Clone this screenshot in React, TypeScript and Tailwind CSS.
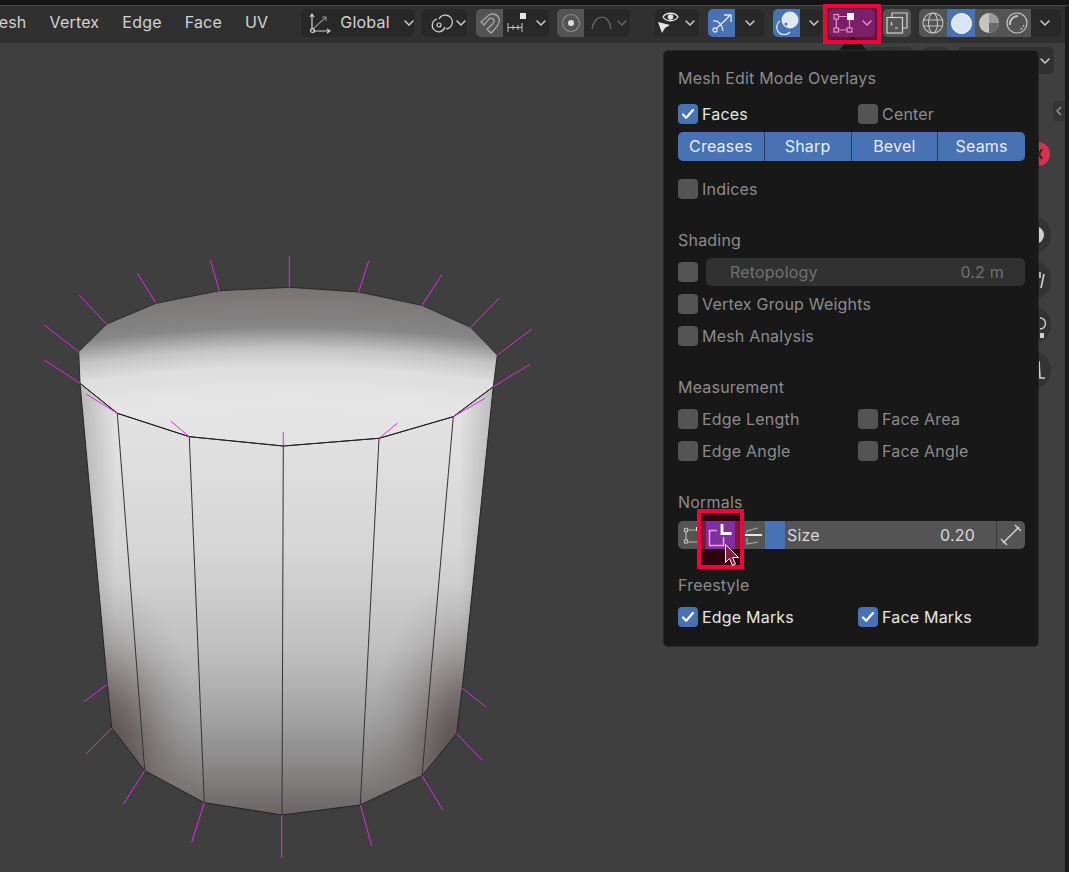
import React from "react";

const Chevron = ({ color = "#d4d4d4" }: { color?: string }) => (
  <svg width="10" height="6" viewBox="0 0 10 6" fill="none">
    <path d="M1 1l4 4 4-4" stroke={color} strokeWidth="1.4" strokeLinecap="round" strokeLinejoin="round" />
  </svg>
);

const Check = ({ on }: { on?: boolean }) => (
  <span className={`flex h-5 w-5 shrink-0 items-center justify-center rounded-[4px] ${on ? "bg-[#4772b3]" : "bg-[#545454]"}`}>
    {on && (
      <svg width="14" height="12" viewBox="0 0 14 12" fill="none">
        <path d="M2 6.5l3.2 3.2L12 2" stroke="#fff" strokeWidth="2.2" strokeLinecap="round" strokeLinejoin="round" />
      </svg>
    )}
  </span>
);

const CheckRow = ({ label, on }: { label: string; on?: boolean }) => (
  <div className="flex h-8 items-center gap-1">
    <Check on={on} />
    <span className={on ? "text-[#e6e6e6]" : "text-[#8c8c8c]"}>{label}</span>
  </div>
);

const Heading = ({ children }: { children: React.ReactNode }) => (
  <div className="flex h-8 items-center text-[#8c8c8c]">{children}</div>
);

const top = "78.7,351.7 106.7,324 156,303.3 219.3,290.7 289.3,287.3 358.7,292 422,305.3 470.7,327.3 497.3,355 493.3,386.7 453.3,416.7 379,438.3 283.3,446 189.3,436.7 117.3,413.3 80,383.3";
const body = "80,383.3 107.3,684.3 111.7,728 144.7,770.7 204.3,802.7 282,815 360.3,805 422,775.7 456.7,733.7 462.3,688.3 493.3,386.7 453.3,416.7 379,438.3 283.3,446 189.3,436.7 117.3,413.3";

const normals = [
  [78.7, 351.7, 44.3, 325], [106.7, 324, 79.3, 295.3], [156, 303.3, 137.3, 273], [219.3, 290.7, 210.3, 260],
  [289.3, 287.3, 289.3, 256], [358.7, 292, 368.7, 261], [422, 305.3, 441.7, 275], [470.7, 327.3, 499, 298.3],
  [497.3, 355, 531.7, 329.3], [493.3, 386.7, 530, 364.3], [453.3, 416.7, 485, 398.3], [379, 438.3, 397.7, 423],
  [283.3, 446, 283.3, 432], [189.3, 436.7, 171, 421.3], [117.3, 413.3, 86, 394], [80, 383.3, 44.3, 360],
  [107.3, 684.3, 84, 701.7], [111.7, 728, 86, 754], [144.7, 770.7, 123.3, 804.3], [204.3, 802.7, 191.7, 842.3],
  [281.7, 815, 281.7, 857.7], [360.3, 805, 371.7, 845.7], [422, 775.7, 442.7, 809.7], [456.7, 733.7, 481.7, 759.7],
  [462.3, 688.3, 485.7, 706.7],
];

const edges = [
  [117.3, 413.3, 144.7, 770.7], [189.3, 436.7, 204.3, 802.7], [283.3, 446, 282, 815],
  [379, 438.3, 360.3, 805], [453.3, 416.7, 422, 775.7],
];

const Cylinder = () => (
  <svg className="absolute left-0 top-0" width="1069" height="872">
    <defs>
      <radialGradient id="cap" cx="288" cy="640" r="360" gradientUnits="userSpaceOnUse" gradientTransform="translate(288 640) scale(2.2 1) translate(-288 -640)">
        <stop offset="0.54" stopColor="#e2e2e2" />
        <stop offset="0.667" stopColor="#e6e6e6" />
        <stop offset="0.76" stopColor="#dedede" />
        <stop offset="0.81" stopColor="#c4c4c4" />
        <stop offset="0.87" stopColor="#868686" />
        <stop offset="0.98" stopColor="#787372" />
      </radialGradient>
      <linearGradient id="side" x1="0" y1="400" x2="0" y2="815" gradientUnits="userSpaceOnUse">
        <stop offset="0" stopColor="#e4e4e4" />
        <stop offset="0.36" stopColor="#d6d6d6" />
        <stop offset="0.6" stopColor="#c0c0c0" />
        <stop offset="0.77" stopColor="#a2a2a2" />
        <stop offset="0.92" stopColor="#807c7c" />
        <stop offset="1" stopColor="#6a6464" />
      </linearGradient>
      <linearGradient id="rim" x1="78" y1="0" x2="498" y2="0" gradientUnits="userSpaceOnUse">
        <stop offset="0" stopColor="#000" stopOpacity="0.2" />
        <stop offset="0.09" stopColor="#000" stopOpacity="0" />
        <stop offset="0.91" stopColor="#000" stopOpacity="0" />
        <stop offset="1" stopColor="#000" stopOpacity="0.2" />
      </linearGradient>
      <radialGradient id="dark">
        <stop offset="0" stopColor="#4a3838" stopOpacity="0.85" />
        <stop offset="0.3" stopColor="#4e4040" stopOpacity="0.62" />
        <stop offset="0.55" stopColor="#544848" stopOpacity="0.32" />
        <stop offset="0.8" stopColor="#5a5050" stopOpacity="0.1" />
        <stop offset="1" stopColor="#605858" stopOpacity="0" />
      </radialGradient>
      <clipPath id="bodyClip">
        <polygon points={body} />
      </clipPath>
    </defs>
    <polygon points={body} fill="url(#side)" />
    <g clipPath="url(#bodyClip)">
      <rect x="70" y="380" width="440" height="440" fill="url(#rim)" />
      <ellipse cx="105" cy="750" rx="95" ry="170" fill="url(#dark)" />
      <ellipse cx="465" cy="750" rx="95" ry="170" fill="url(#dark)" />
    </g>
    <polygon points={top} fill="url(#cap)" />
    <polygon points={top} fill="none" stroke="#2a2a2a" strokeWidth="1" />
    <polygon points={body} fill="none" stroke="#222" strokeWidth="1" />
    {edges.map(([a, b, c, d], i) => (
      <line key={i} x1={a} y1={b} x2={c} y2={d} stroke="#333" strokeWidth="1" />
    ))}
    {normals.map(([a, b, c, d], i) => (
      <line key={i} x1={a} y1={b} x2={c} y2={d} stroke="#e22be2" strokeWidth="1" />
    ))}
  </svg>
);

export default function App() {
  return (
    <div className="relative h-[872px] w-[1069px] overflow-hidden bg-[#3f3f3f] text-[16px] tracking-[0.2px] text-[#d2d2d2]" style={{ fontFamily: "Inter, 'Liberation Sans', sans-serif" }}>
      <div className="h-[5px] bg-[#141414]" />
      {/* header */}
      <div className="flex h-[38px] items-center rounded-tr-lg border-t border-[#4a4a4a] bg-[#303030] pb-[3px]">
        <div className="mb-[2px] ml-[-16px] flex gap-[23px]">
          <span>Mesh</span>
          <span>Vertex</span>
          <span>Edge</span>
          <span>Face</span>
          <span>UV</span>
        </div>
        <div className="ml-[33px] flex h-7 w-[113px] items-center rounded-[5px] bg-[#282828] pl-2">
          <svg width="22" height="22" viewBox="0 0 22 22" fill="none" stroke="#d2d2d2" strokeWidth="1.2">
            <path d="M3 18V3M1 5l2-3 2 3M4 19h16M18 17l3 2-3 2" />
            <path d="M4 17L17 5M13 5h4v4" stroke="#8a8a8a" />
            <circle cx="3.5" cy="18.5" r="2" />
          </svg>
          <span className="mb-[2px] ml-[9px] w-[64px]">Global</span>
          <Chevron />
        </div>
        <div className="ml-2 flex h-7 w-[45px] items-center rounded-[5px] bg-[#282828] pl-2">
          <svg width="24" height="24" viewBox="0 0 24 24" fill="none" stroke="#d2d2d2" strokeWidth="1.2">
            <path d="M9 8a7 7 0 1 1 7 10" />
            <path d="M15 16a6.500 6.500 0 1 1-8-8" />
            <circle cx="9" cy="14" r="2" />
          </svg>
          <span className="ml-0.5"><Chevron /></span>
        </div>
        <div className="ml-[9px] flex h-7 w-[73px] items-center overflow-hidden rounded-[5px] bg-[#282828]">
          <div className="flex h-7 w-[27px] items-center justify-center bg-[#545454]">
            <svg width="22" height="22" viewBox="0 0 22 22" fill="none" stroke="#a8a8a8" strokeWidth="1.3">
              <path d="M2 10L10 3Q16 0 20 6Q22 12 12 21L8 17Q16 11 15 8Q13 5 10 7L5 13Z" />
            </svg>
          </div>
          <svg className="ml-1" width="22" height="22" viewBox="0 0 22 22" fill="none" stroke="#c4c4c4" strokeWidth="1">
            <path d="M1 11v9M6 13v5M11 13v5M15 11v9M1 15.500h14" />
            <rect x="13" y="1" width="6" height="6" fill="#e6e6e6" stroke="none" />
          </svg>
          <span className="ml-[7px]"><Chevron /></span>
        </div>
        <div className="ml-2 flex h-7 w-[73px] items-center overflow-hidden rounded-[5px] bg-[#282828]">
          <div className="flex h-7 w-[27px] items-center justify-center bg-[#545454]">
            <svg width="20" height="20" viewBox="0 0 20 20" fill="none">
              <circle cx="10" cy="10" r="8.500" stroke="#8a8a8a" strokeWidth="1.2" />
              <circle cx="10" cy="10" r="3" fill="#e0e0e0" />
            </svg>
          </div>
          <svg className="ml-[7px]" width="22" height="16" viewBox="0 0 22 16" fill="none" stroke="#6a6a6a" strokeWidth="1.2">
            <path d="M1 14C2 6 7 2 11 2s8 4 9 12" />
          </svg>
          <span className="ml-1"><Chevron color="#666666" /></span>
        </div>
        <div className="ml-[25px] flex h-7 w-[44px] items-center rounded-[5px] bg-[#282828] pl-[2px]">
          <svg width="26" height="24" viewBox="0 0 26 24" fill="none">
            <path d="M6 6c3-5 12-5 15 0-3 5-12 5-15 0z" stroke="#e6e6e6" strokeWidth="1.3" />
            <circle cx="13.500" cy="6" r="2.800" fill="#e6e6e6" />
            <path d="M1 11l12 3-5 3-3 5z" fill="#e6e6e6" />
          </svg>
          <span className="ml-[2px]"><Chevron /></span>
        </div>
        <div className="ml-[9px] flex h-7 w-[56px] items-center overflow-hidden rounded-[5px] bg-[#282828]">
          <div className="flex h-7 w-[27px] items-center justify-center bg-[#4772b3]">
            <svg width="22" height="22" viewBox="0 0 22 22" fill="none" stroke="#dfe7f3" strokeWidth="1.3">
              <circle cx="4" cy="18" r="2" />
              <path d="M6 16C10 12 14 9 19 3M13 3h7v7" />
              <path d="M2 9c5-1 9 3 10 10" />
            </svg>
          </div>
          <span className="ml-[10px]"><Chevron /></span>
        </div>
        <div className="ml-[9px] flex h-7 w-[49px] items-center overflow-hidden rounded-[5px] bg-[#282828]">
          <div className="flex h-7 w-[27px] items-center justify-center bg-[#4772b3]">
            <svg width="24" height="24" viewBox="0 0 24 24" fill="none">
              <path d="M5 10a7.500 7.500 0 1 0 10 11" stroke="#dfe7f3" strokeWidth="1.3" />
              <circle cx="15" cy="9" r="8.500" fill="#dfe7f3" />
              <circle cx="11" cy="13" r="1.500" fill="#4772b3" />
            </svg>
          </div>
          <span className="ml-[9px]"><Chevron /></span>
        </div>
        <div className="relative z-20 ml-[7px] flex h-7 w-[46px] items-center rounded-[5px] bg-[#7a2068] pl-1">
          <svg width="22" height="22" viewBox="0 0 22 22" fill="none" stroke="#f08cc8" strokeWidth="1.2">
            <path d="M5.500 4.500H14M3.300 7v9M5.500 18H14M16.500 8v8" />
            <rect x="1" y="2.500" width="4.500" height="4.500" />
            <rect x="1" y="16" width="4.500" height="4" />
            <rect x="14" y="16" width="5" height="4" />
            <rect x="14" y="1" width="7" height="7" fill="#fff" stroke="none" />
          </svg>
          <span className="ml-[7px]"><Chevron color="#f08cc8" /></span>
        </div>
        <div className="ml-2 flex h-7 w-7 items-center justify-center rounded-[5px] bg-[#545454]">
          <svg width="22" height="22" viewBox="0 0 22 22" fill="none" stroke="#d2d2d2" strokeWidth="1.2">
            <path d="M6 5V1h15v15h-4" />
            <rect x="1" y="5.500" width="15.500" height="15.500" />
            <path d="M5.500 10v3h1M9 16h3" />
          </svg>
        </div>
        <div className="ml-2 flex h-7 w-[142px] items-center overflow-hidden rounded-[5px] bg-[#282828]">
          <div className="flex h-7 w-7 items-center justify-center bg-[#545454]">
            <svg width="22" height="22" viewBox="0 0 22 22" fill="none" stroke="#c4c4c4" strokeWidth="1.1">
              <circle cx="11" cy="11" r="10" />
              <ellipse cx="11" cy="11" rx="4.500" ry="10" />
              <path d="M1.500 8h19M1.500 14h19" />
            </svg>
          </div>
          <div className="flex h-7 w-7 items-center justify-center bg-[#4772b3]">
            <span className="h-[21px] w-[21px] rounded-full border border-white bg-[#dbe4f1]" />
          </div>
          <div className="flex h-7 w-7 items-center justify-center bg-[#545454]">
            <svg width="22" height="22" viewBox="0 0 22 22">
              <circle cx="11" cy="11" r="10" fill="#c4c4c4" />
              <path d="M11 11h10a10 10 0 0 1-10 10z" fill="#6a6a6a" />
              <path d="M11 1a10 10 0 0 1 10 10H11z" fill="#9a9a9a" />
            </svg>
          </div>
          <div className="flex h-7 w-7 items-center justify-center bg-[#545454]">
            <svg width="22" height="22" viewBox="0 0 22 22" fill="none" stroke="#c4c4c4">
              <circle cx="11" cy="11" r="10" strokeWidth="1.2" />
              <path d="M4 13A8 8 0 0 1 12 4" strokeWidth="2" />
              <path d="M18 13a8 8 0 0 1-5 5" strokeWidth="1.200" strokeDasharray="2 1.500" />
            </svg>
          </div>
          <span className="ml-[9px]"><Chevron /></span>
        </div>
      </div>

      {/* second row, mostly behind the popover */}
      <div className="flex items-center justify-end pr-[15px] pt-1">
        <div className="flex h-[27px] w-[46px] divide-x divide-[#2a2a2a] rounded-[5px] bg-[#333]">
          <span className="flex-1" />
          <span className="flex-1" />
        </div>
        <div className="ml-[9px] h-[27px] w-[26px] rounded-[5px] bg-[#333]" />
        <div className="ml-[10px] flex h-[27px] w-[96px] items-center justify-end rounded-[5px] bg-[#303030] pr-[4px]">
          <Chevron />
        </div>
      </div>

      <Cylinder />

      {/* right gizmo */}
      <div className="absolute right-[4px] top-[101px] flex h-5 w-3 items-center justify-center rounded-l-[4px] bg-[#353535]">
        <svg width="6" height="10" viewBox="0 0 6 10" fill="none">
          <path d="M5 1L1 5l4 4" stroke="#a0a0a0" strokeWidth="1.2" />
        </svg>
      </div>
      <div className="absolute left-[1026px] top-[142px] h-6 w-6 rounded-full bg-[#d9304f]" />
      <svg className="absolute left-[1036px] top-[148px]" width="8" height="12" viewBox="0 0 8 12" fill="none">
        <path d="M0 1l6 10M6 1L0 11" stroke="#4a1520" strokeWidth="2" />
      </svg>
      <div className="absolute left-[1013px] top-[216px] h-[38px] w-[38px] rounded-full bg-[#333]" />
      <div className="absolute left-[1030px] top-[226px] h-[18px] w-[14px] rounded-r-full bg-[#d0d0d0]" />
      <div className="absolute left-[1013px] top-[261px] h-[38px] w-[38px] rounded-full bg-[#333]" />
      <svg className="absolute left-[1036px] top-[270px]" width="10" height="20" viewBox="0 0 10 20" fill="none" stroke="#d0d0d0" strokeWidth="1.6">
        <path d="M4 2v6M8 4L5 18" />
      </svg>
      <div className="absolute left-[1013px] top-[306px] h-[38px] w-[38px] rounded-full bg-[#333]" />
      <svg className="absolute left-[1036px] top-[316px]" width="10" height="24" viewBox="0 0 10 24" fill="none" stroke="#d0d0d0" strokeWidth="1.4">
        <path d="M4 2a5 5 0 0 1 0 11" />
        <rect x="4" y="17" width="4" height="5" fill="#d0d0d0" stroke="none" />
      </svg>
      <div className="absolute left-[1013px] top-[351px] h-[38px] w-[38px] rounded-full bg-[#333]" />
      <svg className="absolute left-[1036px] top-[359px]" width="10" height="22" viewBox="0 0 10 22" fill="none" stroke="#d0d0d0" strokeWidth="1.6">
        <path d="M3 2l1 17h5" />
      </svg>
      <div className="absolute bottom-0 right-0 top-[6px] w-1 bg-[#1a1a1a]" />

      {/* popover */}
      <div className="absolute left-[663px] top-[50px] w-[376px] rounded-[5px] border border-[#282828] bg-[#181818] pb-[13px] pl-[14px] pr-[13px] pt-[11px]">
        <div className="absolute left-[175px] top-[-15px] h-0 w-0 border-x-[14px] border-b-[14px] border-x-transparent border-b-[#181818]" />
        <Heading>Mesh Edit Mode Overlays</Heading>
        <div className="mt-1 grid grid-cols-[180px_1fr]">
          <CheckRow label="Faces" on />
          <CheckRow label="Center" />
        </div>
        <div className="flex h-8 items-center">
          <div className="grid h-[29px] w-full grid-cols-4 divide-x divide-[#2a3a55] rounded-[5px] bg-[#4772b3] text-[#ececec]">
            <span className="flex items-center justify-center">Creases</span>
            <span className="flex items-center justify-center">Sharp</span>
            <span className="flex items-center justify-center">Bevel</span>
            <span className="flex items-center justify-center">Seams</span>
          </div>
        </div>
        <div className="mt-[11px]">
          <CheckRow label="Indices" />
        </div>

        <div className="mt-[19px]">
          <Heading>Shading</Heading>
          <div className="flex h-8 items-center gap-2">
            <Check />
            <div className="flex h-7 flex-1 items-center justify-between rounded-[5px] bg-[#313131] pl-6 pr-[21px] text-[#707070]">
              <span>Retopology</span>
              <span>0.2 m</span>
            </div>
          </div>
          <CheckRow label="Vertex Group Weights" />
          <CheckRow label="Mesh Analysis" />
        </div>

        <div className="mt-[19px]">
          <Heading>Measurement</Heading>
          <div className="grid grid-cols-[180px_1fr]">
            <CheckRow label="Edge Length" />
            <CheckRow label="Face Area" />
            <CheckRow label="Edge Angle" />
            <CheckRow label="Face Angle" />
          </div>
        </div>

        <div className="mt-[19px]">
          <Heading>Normals</Heading>
          <div className="mt-[3px] flex h-7 items-center overflow-hidden rounded-[5px] bg-[#545454]">
            <div className="flex h-7 w-[29px] items-center justify-center">
              <svg width="20" height="20" viewBox="0 0 20 20" fill="none" stroke="#b8b8b8" strokeWidth="1.2">
                <path d="M4 5h9M3 7v8M5 17h11M17 15V9" />
                <rect x="1.500" y="3.500" width="3" height="3" />
                <rect x="1.500" y="15" width="3" height="3" />
                <rect x="15.500" y="15" width="3" height="3" />
                <path d="M14 6V3h3" stroke="#e0e0e0" strokeWidth="2" />
              </svg>
            </div>
            <div className="w-[29px]" />
            <div className="flex h-7 w-[29px] items-center justify-center">
              <svg width="22" height="20" viewBox="0 0 22 20" fill="none" stroke="#a8a8a8" strokeWidth="1.2">
                <path d="M7 8V6l11-3M7 13v6l11-2" />
                <path d="M5 10h17" stroke="#e6e6e6" strokeWidth="2.2" />
              </svg>
            </div>
            <div className="h-7 w-5 bg-[#4772b3]" />
            <div className="flex h-7 w-[212px] items-center justify-between border-r border-[#3a3a3a] pl-[2px] pr-[21px] text-[#d8d8d8]">
              <span>Size</span>
              <span>0.20</span>
            </div>
            <div className="flex h-7 flex-1 items-center justify-center">
              <svg width="22" height="22" viewBox="0 0 22 22" fill="none" stroke="#d8d8d8" strokeWidth="1.3">
                <path d="M3 19L19 3M15 1l6 6M1 15l6 6" />
              </svg>
            </div>
          </div>
        </div>

        <div className="mt-[20px]">
          <Heading>Freestyle</Heading>
          <div className="grid grid-cols-[180px_1fr]">
            <CheckRow label="Edge Marks" on />
            <CheckRow label="Face Marks" on />
          </div>
        </div>
      </div>

      {/* annotation boxes */}
      <div className="absolute left-[823px] top-[4px] z-10 h-10 w-[58px] border-4 border-[#f5003d] bg-[#66132f]">
        <div className="absolute bottom-0 left-[22px] h-0 w-0 border-x-[4px] border-b-[4px] border-x-transparent border-b-[#3a0614]" />
      </div>
      <div className="absolute left-[697px] top-[509px] flex h-[60px] w-[47px] flex-col border-4 border-[#f5003d] bg-[#2e0010]">
        <div className="mt-2 flex h-[28px]">
          <div className="w-[5px] bg-[#7c1c34]" />
          <div className="flex flex-1 bg-[#7f2f9f]">
            <svg width="29" height="28" viewBox="0 0 29 28" fill="none">
              <path d="M11 9.500H3.500V24.500H17.500V16" stroke="#f0a0e0" strokeWidth="1.500" />
              <path d="M16 3V12.500H25.500" stroke="#fff" strokeWidth="2.800" />
            </svg>
          </div>
          <div className="w-[5px] bg-[#7c1c34]" />
        </div>
      </div>
      <svg className="absolute left-[724px] top-[543px]" width="16" height="24" viewBox="0 0 16 24">
        <path d="M1.500 1.500v18l4-4 3 7 3-1.500-3-6.500h6z" fill="#8a1a3a" stroke="#fff" strokeWidth="1" />
      </svg>
    </div>
  );
}
